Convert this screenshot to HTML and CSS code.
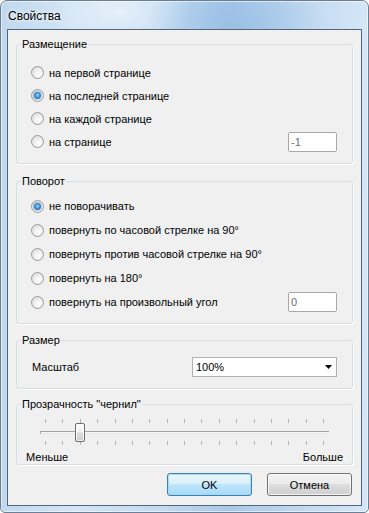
FILE: index.html
```html
<!DOCTYPE html>
<html>
<head>
<meta charset="utf-8">
<link rel="stylesheet" href="styles.css">
</head>
<body>
<div class="window">
  <div class="titlebar"><span class="title">Свойства</span></div>
  <div class="client">
    <fieldset class="group g-place">
      <legend>Размещение</legend>
      <div class="body">
        <div class="row"><span class="radio"></span><span class="label">на первой странице</span></div>
        <div class="row"><span class="radio checked"></span><span class="label">на последней странице</span></div>
        <div class="row"><span class="radio"></span><span class="label">на каждой странице</span></div>
        <div class="row"><span class="radio"></span><span class="label grow">на странице</span><span class="textbox">-1</span></div>
      </div>
    </fieldset>
    <fieldset class="group g-rotate">
      <legend>Поворот</legend>
      <div class="body">
        <div class="row tall"><span class="radio checked"></span><span class="label">не поворачивать</span></div>
        <div class="row tall"><span class="radio"></span><span class="label">повернуть по часовой стрелке на 90°</span></div>
        <div class="row tall"><span class="radio"></span><span class="label">повернуть против часовой стрелке на 90°</span></div>
        <div class="row tall"><span class="radio"></span><span class="label">повернуть на 180°</span></div>
        <div class="row tall"><span class="radio"></span><span class="label grow">повернуть на произвольный угол</span><span class="textbox">0</span></div>
      </div>
    </fieldset>
    <fieldset class="group g-size">
      <legend>Размер</legend>
      <div class="body">
        <div class="size-row">
          <span class="label grow">Масштаб</span>
          <div class="select"><span>100%</span><svg class="arrow" width="7" height="4" viewBox="0 0 7 4"><path d="M0 0H7L3.5 4Z" fill="#000"/></svg></div>
        </div>
      </div>
    </fieldset>
    <fieldset class="group g-opacity">
      <legend>Прозрачность "чернил"</legend>
      <div class="body">
        <div class="slider">
          <div class="ticks"><i></i><i></i><i></i><i></i><i></i><i></i><i></i><i></i><i></i><i></i><i></i><i></i><i></i><i></i><i></i><i></i><i></i></div>
          <div class="track"></div>
          <div class="ticks bottom"><i></i><i></i><i></i><i></i><i></i><i></i><i></i><i></i><i></i><i></i><i></i><i></i><i></i><i></i><i></i><i></i><i></i></div>
          <div class="thumb"></div>
        </div>
        <div class="range-labels"><span>Меньше</span><span>Больше</span></div>
      </div>
    </fieldset>
    <div class="buttons">
      <div class="btn btn-default">OK</div>
      <div class="btn">Отмена</div>
    </div>
  </div>
</div>
</body>
</html>
```
FILE: styles.css
```css
html, body {
  margin: 0;
  padding: 0;
  background: #ffffff;
}

.window {
  width: 369px;
  height: 513px;
  box-sizing: border-box;
  border: 1px solid #6a7e94;
  border-radius: 7px 7px 5px 5px;
  padding: 0 6px 6px 6px;
  display: flex;
  flex-direction: column;
  font-family: "Liberation Sans", Arial, sans-serif;
  font-size: 11px;
  color: #000;
  background:
    radial-gradient(ellipse 90px 50px at 235px 22px, rgba(140, 184, 226, 0.55), rgba(140, 184, 226, 0) 100%),
    radial-gradient(ellipse 70px 40px at 120px 10px, rgba(235, 244, 252, 0.8), rgba(235, 244, 252, 0) 100%),
    linear-gradient(to right, #c0d8ee 0%, #d3e5f5 20%, #c2daf0 45%, #a9c9e8 62%, #c4dbf1 85%, #d5e7f7 100%);
  box-shadow: inset 0 0 0 1px rgba(255, 255, 255, 0.55);
  overflow: hidden;
}

.titlebar {
  height: 28px;
  flex: none;
  display: flex;
  align-items: center;
  padding-left: 1px;
}

.title {
  font-family: "Liberation Sans", Arial, sans-serif;
  font-size: 12px;
  color: #000;
  text-shadow: 0 0 6px rgba(255, 255, 255, 0.9), 0 0 3px rgba(255, 255, 255, 0.9);
  padding-top: 1px;
}

.client {
  flex: 1;
  box-sizing: border-box;
  border: 1px solid #55657a;
  background: #f0f0f0;
  display: flex;
  flex-direction: column;
}

.group {
  margin: 0 8px;
  padding: 0;
  border: 1px solid #d5dfe5;
  border-radius: 3px;
  box-shadow: 1px 1px 0 #ffffff;
  min-width: 0;
}

.group legend {
  margin-left: 4px;
  padding: 0 1px;
  line-height: 14px;
  font-size: 11px;
}

.g-place {
  margin-top: 7px;
}

.g-place .body {
  padding: 10px 15px 10px 14px;
}

.g-rotate {
  margin-top: 10px;
}

.g-rotate .body {
  padding: 6px 15px 9px 14px;
}

.g-size {
  margin-top: 9px;
}

.g-size .body {
  padding: 10px 15px 11px 15px;
}

.g-opacity {
  margin-top: 8px;
}

.g-opacity .body {
  padding: 4px 0 0 0;
}

.row {
  height: 23px;
  display: flex;
  align-items: center;
}

.row.tall {
  height: 24px;
}

.radio {
  flex: none;
  width: 13px;
  height: 13px;
  box-sizing: border-box;
  border-radius: 50%;
  border: 1px solid #979a9c;
  background: radial-gradient(circle at 62% 68%, #ffffff 0%, #eeeeee 45%, #d2d2d2 100%);
  display: flex;
  align-items: center;
  justify-content: center;
}

.radio.checked::after {
  content: "";
  width: 7px;
  height: 7px;
  border-radius: 50%;
  background: radial-gradient(circle at 50% 45%, #a8dcff 0%, #3e98e0 40%, #1a4f96 100%);
  box-shadow: 0 0 0 1px rgba(30, 70, 130, 0.25);
}

.label {
  margin-left: 5px;
  white-space: nowrap;
}

.grow {
  flex: 1;
}

.textbox {
  flex: none;
  width: 49px;
  height: 20px;
  box-sizing: border-box;
  border: 1px solid #a8a8a8;
  border-radius: 2px;
  background: #ffffff;
  color: #6d6d6d;
  padding-left: 2px;
  line-height: 18px;
}

.size-row {
  display: flex;
  align-items: center;
  height: 20px;
}

.size-row .label {
  margin-left: 0;
}

.select {
  width: 145px;
  height: 20px;
  box-sizing: border-box;
  border: 1px solid #b0b0b0;
  background: #ffffff;
  display: flex;
  align-items: center;
  justify-content: space-between;
  padding: 0 4px 0 3px;
}

.arrow {
  display: block;
}

.slider {
  position: relative;
  height: 32px;
  box-sizing: border-box;
  padding-top: 4px;
}

.ticks {
  margin-left: 28px;
  width: 279px;
  height: 4px;
  display: flex;
  justify-content: space-between;
}

.ticks i {
  display: block;
  width: 1px;
  height: 4px;
  background: #b4b4b4;
}

.ticks.bottom {
  margin-top: 7px;
}

.track {
  margin: 8px 0 0 23px;
  width: 289px;
  height: 3px;
  box-sizing: border-box;
  border-top: 1px solid #a2a2a2;
  border-left: 1px solid #a2a2a2;
  background: #f7f7f7;
  border-bottom: 1px solid #e4e4e4;
}

.thumb {
  position: absolute;
  left: 58px;
  top: 8px;
  width: 10px;
  height: 19px;
  box-sizing: border-box;
  border: 1px solid #6e6e6e;
  border-radius: 2px;
  background: linear-gradient(#fbfbfb 0%, #f0f0f0 45%, #dcdcdc 55%, #d0d0d0 100%);
  box-shadow: inset 0 0 0 1px rgba(255, 255, 255, 0.7);
}

.range-labels {
  margin-top: 4px;
  line-height: 13px;
  display: flex;
  justify-content: space-between;
  padding: 0 9px 0 9px;
}

.buttons {
  margin-top: 8px;
  display: flex;
  justify-content: flex-end;
  gap: 15px;
  padding-right: 9px;
}

.btn {
  width: 85px;
  height: 23px;
  box-sizing: border-box;
  border: 1px solid #707070;
  border-radius: 3px;
  background: linear-gradient(#f2f2f2 0%, #ebebeb 50%, #dddddd 50%, #cfcfcf 100%);
  box-shadow: inset 0 0 0 1px rgba(255, 255, 255, 0.75);
  display: flex;
  align-items: center;
  justify-content: center;
}

.btn-default {
  border-color: #3c7fb1;
  background: linear-gradient(#eaf6fd 0%, #d9f0fc 50%, #bee6fd 50%, #a7d9f5 100%);
  box-shadow: inset 0 0 0 1px rgba(160, 220, 248, 0.9);
}
```
